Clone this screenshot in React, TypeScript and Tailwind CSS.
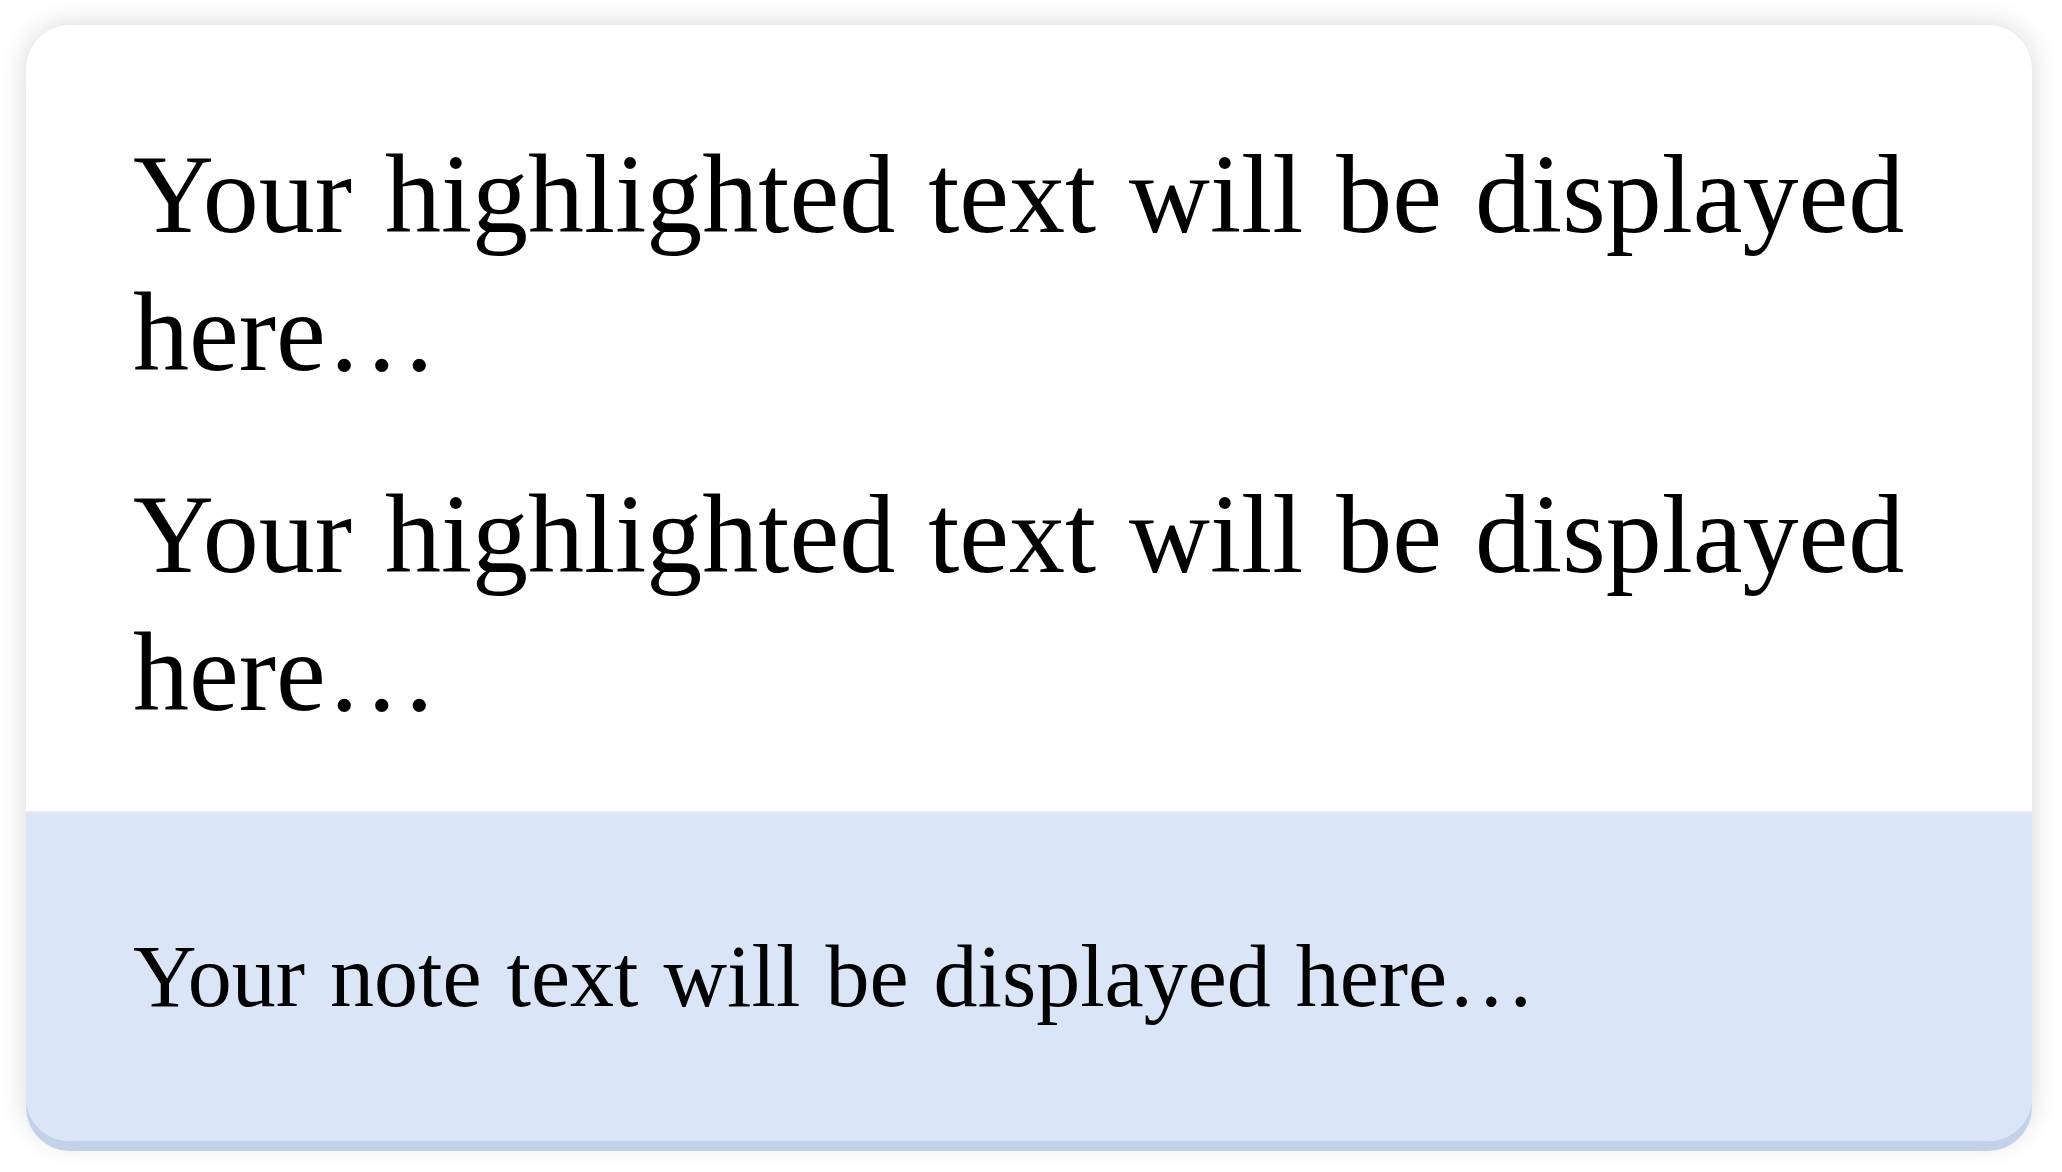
import React from "react";

export default function App() {
  const serif = { fontFamily: '"Liberation Serif", "Times New Roman", serif' };
  return (
    <div className="min-h-[1172px] w-[2062px] bg-white pt-[25px] pl-[26px] pr-[30px]">
      <div
        className="flex w-[2006px] flex-col overflow-hidden rounded-[44px] bg-white shadow-[0_10px_0_#c4d2e9,0_0_28px_rgba(0,0,0,0.16)]"
        style={serif}
      >
        <div className="flex flex-col gap-[64px] border-b-2 border-[#ececec] pt-[100px] pb-[70px] pl-[107px] pr-[80px] text-[112px] leading-[138px] text-black [word-spacing:5px]">
          <p>Your highlighted text will be displayed here…</p>
          <p>Your highlighted text will be displayed here…</p>
        </div>
        <div className="flex h-[328px] items-center bg-[#dae6f8] pl-[107px] text-[88px] leading-none text-black [word-spacing:3px]">
          <p>Your note text will be displayed here…</p>
        </div>
      </div>
    </div>
  );
}
